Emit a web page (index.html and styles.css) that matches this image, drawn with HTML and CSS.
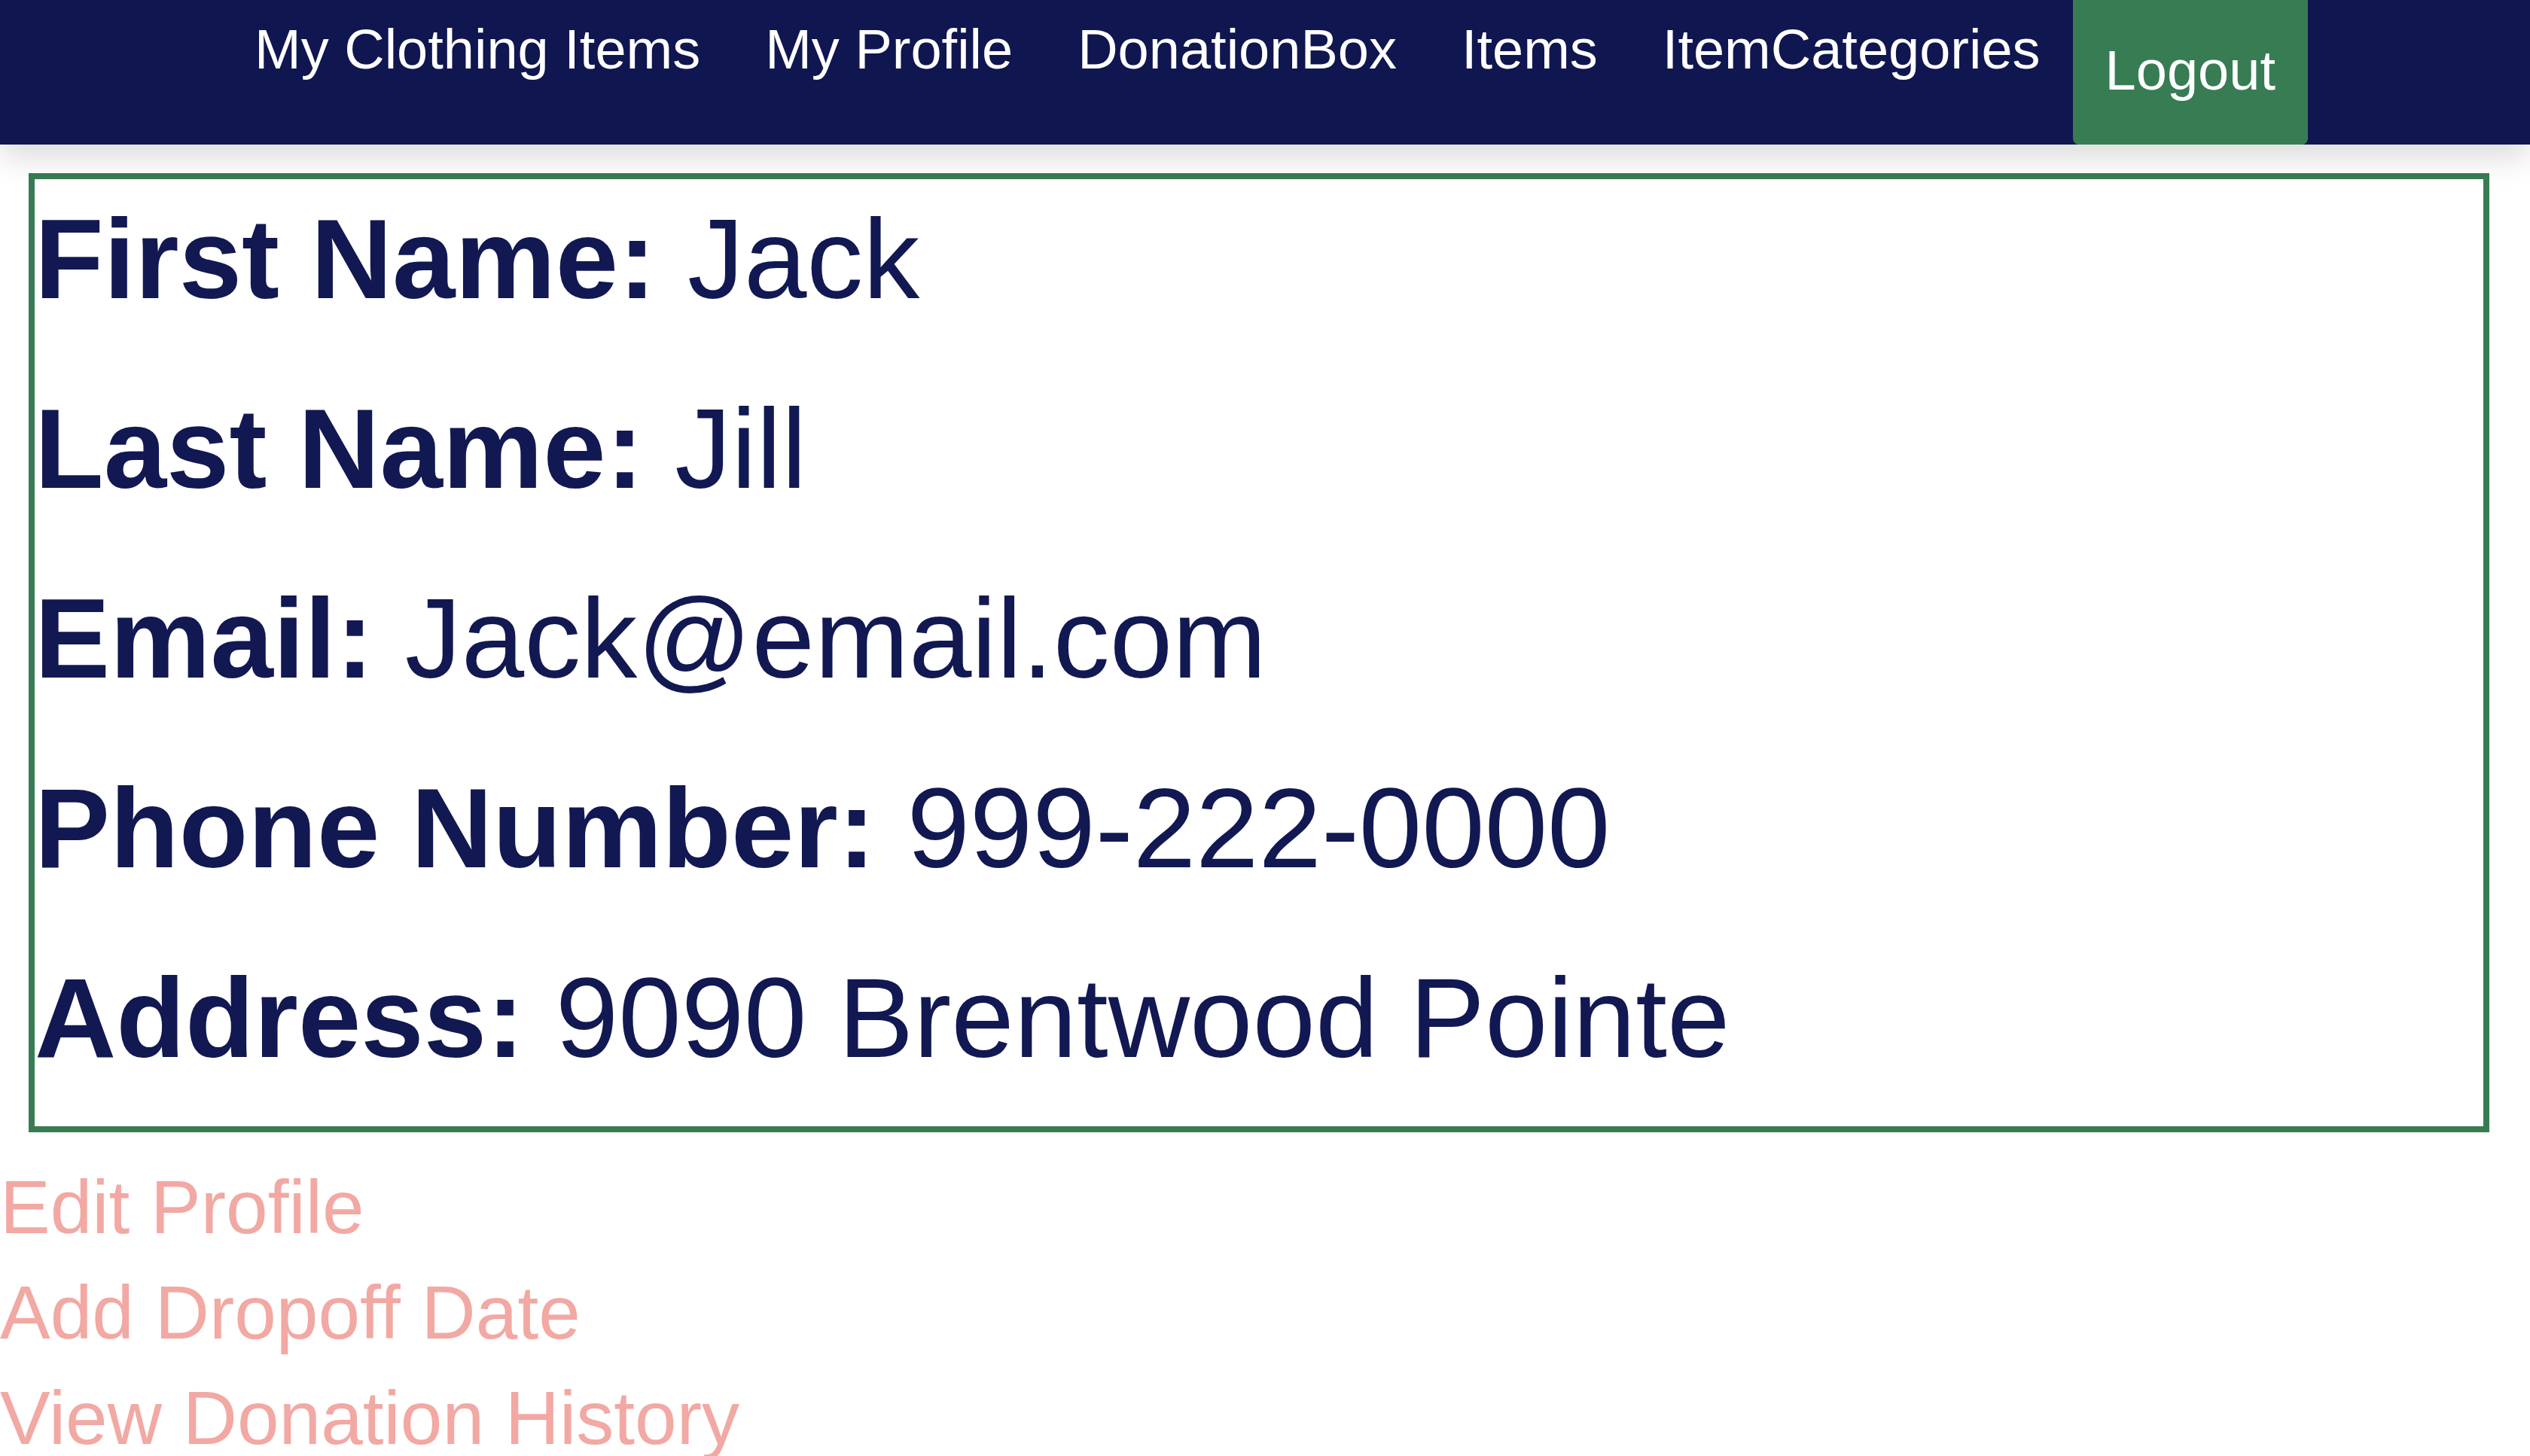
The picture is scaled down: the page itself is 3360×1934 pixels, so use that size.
FILE: index.html
```html
<!DOCTYPE html>
<html lang="en">
<head>
<meta charset="utf-8">
<title>My Profile</title>
<link rel="stylesheet" href="styles.css">
</head>
<body>
<nav class="navbar">
  <a class="nav-link" href="#">My Clothing Items</a>
  <a class="nav-link" href="#">My Profile</a>
  <a class="nav-link" href="#">DonationBox</a>
  <a class="nav-link" href="#">Items</a>
  <a class="nav-link" href="#">ItemCategories</a>
  <a class="nav-logout" href="#">Logout</a>
</nav>
<main>
  <section class="profile-box">
    <div class="profile-row"><span class="label">First Name:</span> Jack</div>
    <div class="profile-row"><span class="label">Last Name:</span> Jill</div>
    <div class="profile-row"><span class="label">Email:</span> Jack@email.com</div>
    <div class="profile-row"><span class="label">Phone Number:</span> 999-222-0000</div>
    <div class="profile-row"><span class="label">Address:</span> 9090 Brentwood Pointe</div>
  </section>
  <div class="actions">
    <a class="action-link" href="#">Edit Profile</a>
    <a class="action-link" href="#">Add Dropoff Date</a>
    <a class="action-link" href="#">View Donation History</a>
  </div>
</main>
</body>
</html>
```
FILE: styles.css
```css
html, body {
  margin: 0;
  padding: 0;
  background: #ffffff;
}

body {
  font-family: "Liberation Sans", Arial, Helvetica, sans-serif;
  color: #111852;
  overflow: hidden;
}

.navbar {
  position: relative;
  z-index: 2;
  display: flex;
  justify-content: center;
  align-items: flex-start;
  height: 192px;
  background: #10164f;
  box-shadow: 0 16px 40px rgba(0, 0, 0, 0.15);
}

.nav-link {
  display: block;
  padding: 23px 43px 0;
  font-size: 74px;
  line-height: normal;
  color: #ffffff;
  text-decoration: none;
}

.nav-logout {
  display: block;
  align-self: stretch;
  box-sizing: border-box;
  height: 192px;
  padding: 51px 43px 0;
  font-size: 74px;
  line-height: normal;
  color: #ffffff;
  text-decoration: none;
  background: #387c54;
  border-radius: 0 0 8px 8px;
}

.profile-box {
  display: flex;
  flex-direction: column;
  gap: 80px;
  margin: 38px 54px 0 38px;
  padding: 20px 0 58px 0;
  border: 8px solid #387c54;
}

.profile-row {
  font-size: 150px;
  line-height: 172px;
  white-space: nowrap;
}

.label {
  font-weight: bold;
}

.actions {
  display: flex;
  flex-direction: column;
  margin-top: 29px;
}

.action-link {
  display: block;
  font-size: 100px;
  line-height: 140px;
  color: #f2a8a3;
  text-decoration: none;
  white-space: nowrap;
}
```
